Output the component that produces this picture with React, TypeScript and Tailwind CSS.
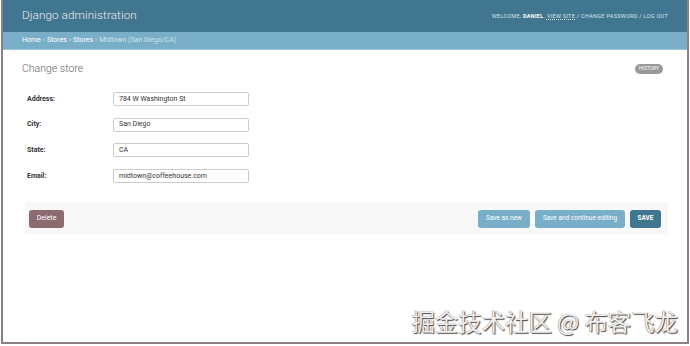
import React from 'react';

const fields = [
  { label: 'Address:', value: '784 W Washington St' },
  { label: 'City:', value: 'San Diego' },
  { label: 'State:', value: 'CA' },
  { label: 'Email:', value: 'midtown@coffeehouse.com' },
];

export default function App() {
  return (
    <div className="w-[690px] h-[346px] bg-white font-['Roboto',sans-serif] overflow-hidden">
      <div className="ml-[1px] w-[688px] h-[344px] border-x-2 border-b-2 border-[#8d8085] flex flex-col">
        {/* header */}
        <div className="h-[32px] bg-[#417690] flex items-center justify-between pl-[19px] pr-[19px]">
          <div className="text-[11.7px] font-light text-[#f3ecec] tracking-[0.1px]">Django administration</div>
          <div className="text-[5.5px] uppercase tracking-[0.3px] text-[#d6e4ec]">
            Welcome, <span className="font-bold text-white">Daniel</span>.{' '}
            <span className="underline decoration-dotted">View site</span> / Change password / Log out
          </div>
        </div>
        {/* breadcrumbs */}
        <div className="h-[18px] bg-[#79aec8] border-b border-[#9cc3d6] flex items-center pl-[19px] text-[7px] text-[#cfe3ec]">
          <span className="text-white">Home</span>
          <span className="mx-[2px]">›</span>
          <span className="text-white">Stores</span>
          <span className="mx-[2px]">›</span>
          <span className="text-white">Stores</span>
          <span className="mx-[2px]">›</span>
          <span>Midtown (San Diego/CA)</span>
        </div>
        {/* content */}
        <div className="flex-1 flex flex-col pl-[19px] pr-[19px]">
          <div className="flex items-center justify-between mt-[12px] h-[13px]">
            <div className="text-[10.5px] font-light text-[#666]">Change store</div>
            <div className="h-[10px] px-[4px] rounded-full bg-[#999] text-[5px] uppercase text-white flex items-center mr-[5px]">History</div>
          </div>
          <div className="flex flex-col gap-[11.7px] mt-[17px] pl-[5px]">
            {fields.map(f => (
              <div key={f.label} className="flex items-center h-[14px]">
                <div className="w-[86px] text-[7px] font-bold text-[#333]">{f.label}</div>
                <div className="w-[136px] h-[14px] border border-[#ccc] rounded-[2px] flex items-center pl-[5px] text-[7px] text-[#333]">{f.value}</div>
              </div>
            ))}
          </div>
          <div className="mt-[19px] ml-[3px] w-[643px] h-[33px] bg-[#f8f8f8] flex items-center pl-[4px] pr-[7px]">
            <div className="h-[18px] w-[35px] rounded-[3px] bg-[#8b6a70] text-white text-[7px] flex items-center justify-center">Delete</div>
            <div className="flex-1" />
            <div className="h-[18px] w-[52px] rounded-[3px] bg-[#79aec8] text-white text-[6.5px] flex items-center justify-center">Save as new</div>
            <div className="h-[18px] w-[90px] ml-[5px] rounded-[3px] bg-[#79aec8] text-white text-[6.5px] flex items-center justify-center">Save and continue editing</div>
            <div className="h-[18px] w-[31px] ml-[5px] rounded-[3px] bg-[#417690] text-white text-[6.5px] font-bold flex items-center justify-center">SAVE</div>
          </div>
          <div className="flex-1" />
          <div className="flex justify-end mr-[-10px] mb-[5px]">
            <div className="text-[23.4px] leading-[32px] text-[#eeeeee] font-['Noto_Sans_CJK_SC',sans-serif] [text-shadow:1px_1px_1px_#444,-0.5px_-0.5px_0_#999]">掘金技术社区 @ 布客飞龙</div>
          </div>
        </div>
      </div>
    </div>
  );
}
